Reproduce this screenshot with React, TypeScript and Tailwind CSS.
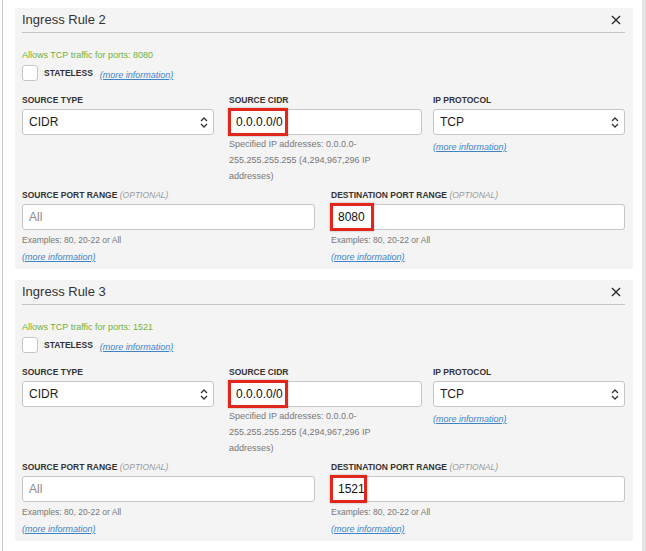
const font = { fontFamily: '"Liberation Sans", Arial, sans-serif' };

const Chevrons = () => (
  <svg width="8" height="13" viewBox="0 0 8 13" className="shrink-0">
    <path d="M1 5 L4 2 L7 5" fill="none" stroke="#333" strokeWidth="1.3" />
    <path d="M1 8 L4 11 L7 8" fill="none" stroke="#333" strokeWidth="1.3" />
  </svg>
);

const CloseX = () => (
  <svg width="10" height="10" viewBox="0 0 10 10">
    <path d="M1 1 L9 9 M9 1 L1 9" stroke="#2b2b2b" strokeWidth="1.4" />
  </svg>
);

const MoreInfo = () => (
  <span className="text-[9px] italic underline text-[#3d84c6]">(more information)</span>
);

const Label = ({ text, optional }: { text: string; optional?: boolean }) => (
  <div className="h-[10px] leading-[10px] text-[8.5px] font-bold text-[#333] uppercase whitespace-nowrap">
    {text}
    {optional && <span className="font-normal italic text-[#9a9a9a]"> (OPTIONAL)</span>}
  </div>
);

const Select = ({ value }: { value: string }) => (
  <div className="mt-[4px] h-[26px] bg-white border border-[#c6c6c6] rounded-[3px] flex items-center justify-between pl-[6px] pr-[5px] text-[12px] text-[#1d1d1d]">
    <span>{value}</span>
    <Chevrons />
  </div>
);

// red annotation box drawn over the value
const Marked = ({ value, w }: { value: string; w: string }) => (
  <div className="relative mt-[4px] h-[26px] bg-white border border-[#c6c6c6] rounded-[3px] flex items-center pl-[6px] text-[12px] text-[#111]">
    <span>{value}</span>
    <div className={`absolute -left-[2px] -top-[2px] h-[28px] border-[3px] border-[#e3261c] shadow-[0_0_2px_rgba(0,0,0,0.3)] ${w}`} />
  </div>
);

const Rule = ({ n, port, boxW }: { n: number; port: string; boxW: string }) => (
  <div className="h-[261px] bg-[#f4f4f4] pl-[7px] pr-[8px] shrink-0">
    <div className="h-[25px] flex items-center justify-between border-b border-[#c4c4c4] pr-[4px]">
      <span className="text-[13px] text-[#333]">Ingress Rule {n}</span>
      <CloseX />
    </div>
    <div className="mt-[16px] text-[9px] leading-[12px] text-[#72b23a]">
      Allows TCP traffic for ports: {port}
    </div>
    <div className="mt-[4px] h-[16px] flex items-center">
      <div className="w-[16px] h-[16px] bg-white border border-[#c6c6c6] rounded-[3px]" />
      <span className="ml-[6px] text-[8.5px] font-bold text-[#333]">STATELESS</span>
      <span className="ml-[7px]">
        <MoreInfo />
      </span>
    </div>

    <div className="mt-[14px] flex">
      <div className="w-[192px]">
        <Label text="Source Type" />
        <Select value="CIDR" />
      </div>
      <div className="w-[193px] ml-[15px]">
        <Label text="Source CIDR" />
        <Marked value="0.0.0.0/0" w="w-[60px]" />
        <div className="mt-[1px] text-[9px] leading-[16px] text-[#777]">
          Specified IP addresses: 0.0.0.0-
          <br />
          255.255.255.255 (4,294,967,296 IP
          <br />
          addresses)
        </div>
      </div>
      <div className="w-[192px] ml-[11px]">
        <Label text="IP Protocol" />
        <Select value="TCP" />
        <div className="mt-[2px] leading-[16px]">
          <MoreInfo />
        </div>
      </div>
    </div>

    <div className="mt-[6px] flex">
      <div className="w-[293px]">
        <Label text="Source Port Range" optional />
        <div className="mt-[4px] h-[26px] bg-white border border-[#c6c6c6] rounded-[3px] flex items-center pl-[6px] text-[12px] text-[#8a8a8a]">
          All
        </div>
        <div className="mt-[4px] text-[8.5px] leading-[12px] text-[#777]">Examples: 80, 20-22 or All</div>
        <div className="mt-[3px] leading-[12px]">
          <MoreInfo />
        </div>
      </div>
      <div className="w-[294px] ml-[16px]">
        <Label text="Destination Port Range" optional />
        <Marked value={port} w={boxW} />
        <div className="mt-[4px] text-[8.5px] leading-[12px] text-[#777]">Examples: 80, 20-22 or All</div>
        <div className="mt-[3px] leading-[12px]">
          <MoreInfo />
        </div>
      </div>
    </div>
  </div>
);

export default function App() {
  return (
    <div className="w-[646px] h-[551px] bg-white flex overflow-hidden" style={font}>
      <div className="w-[2px] shrink-0" />
      <div className="flex-1 border-l border-[#c9c9c9] pl-[12px] pr-[9px] pt-[8px] flex flex-col gap-[11px]">
        <Rule n={2} port="8080" boxW="w-[44px]" />
        <Rule n={3} port="1521" boxW="w-[37px]" />
      </div>
      <div className="w-[4px] shrink-0 bg-[#e4e4e4]" />
    </div>
  );
}
